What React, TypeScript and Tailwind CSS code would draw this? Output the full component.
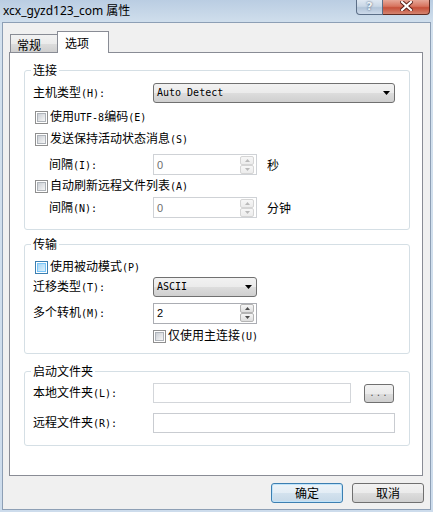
import React from "react";

function Txt({ s }: { s: string }) {
  const parts = s.match(/[\x20-\x7e]+|[^\x20-\x7e]+/g) || [];
  return (
    <>
      {parts.map((p, i) =>
        /^[\x20-\x7e]/.test(p) ? (
          <span key={i} className="font-['DejaVu_Sans_Mono',monospace] text-[10px]">
            {p}
          </span>
        ) : (
          <span key={i}>{p}</span>
        )
      )}
    </>
  );
}

function Check({ blue }: { blue?: boolean }) {
  return (
    <span
      className={
        blue
          ? "w-[13px] h-[13px] shrink-0 border border-[#3c7fb1] bg-white flex items-center justify-center"
          : "w-[13px] h-[13px] shrink-0 border border-[#8f8f8f] bg-white flex items-center justify-center"
      }
    >
      <span
        className={
          blue
            ? "w-[9px] h-[9px] border border-[#79c6f9] bg-[linear-gradient(135deg,#a6d6f6,#def1fc)]"
            : "w-[9px] h-[9px] border border-[#aeb3b9] bg-[linear-gradient(135deg,#cbcfd5,#f6f6f6)]"
        }
      />
    </span>
  );
}

function Arrow() {
  return (
    <svg width="7" height="4" viewBox="0 0 7 4" className="shrink-0">
      <path d="M0 0H7L3.5 4Z" fill="#000" />
    </svg>
  );
}

function Combo({ text, wide }: { text: string; wide?: boolean }) {
  return (
    <div
      className={
        (wide ? "w-[242px] " : "w-[104px] ") +
        "h-[20px] border border-[#707070] rounded-[3px] bg-[linear-gradient(to_bottom,#f2f2f2_0%,#ebebeb_50%,#dddddd_51%,#cfcfcf_100%)] flex items-center justify-between pl-[3px] pr-[4px]"
      }
    >
      <span className="font-['DejaVu_Sans_Mono',monospace] text-[10px] text-black">{text}</span>
      <Arrow />
    </div>
  );
}

function SpinBtn({ up, enabled }: { up?: boolean; enabled?: boolean }) {
  return (
    <div
      className={
        enabled
          ? "w-[14px] h-[9px] border border-[#b4b4b4] rounded-[2px] bg-[linear-gradient(to_bottom,#f6f6f6,#dedede)] flex items-center justify-center"
          : "w-[14px] h-[9px] border border-[#d5d5d5] rounded-[2px] bg-[linear-gradient(to_bottom,#f7f7f7,#ececec)] flex items-center justify-center"
      }
    >
      <svg width="5" height="3" viewBox="0 0 5 3">
        <path d={up ? "M0 3H5L2.5 0Z" : "M0 0H5L2.5 3Z"} fill={enabled ? "#4d4d4d" : "#b9b9b9"} />
      </svg>
    </div>
  );
}

function Spin({ value, enabled }: { value: string; enabled?: boolean }) {
  return (
    <div
      className={
        enabled
          ? "w-[104px] h-[21px] shrink-0 border border-[#abadb3] bg-white flex items-center pl-[3px] pr-[2px]"
          : "w-[104px] h-[21px] shrink-0 border border-[#cfd2d6] bg-white flex items-center pl-[3px] pr-[2px]"
      }
    >
      <span
        className={
          enabled
            ? "flex-1 font-['Liberation_Sans',sans-serif] text-[11px] text-black"
            : "flex-1 font-['Liberation_Sans',sans-serif] text-[11px] text-[#6d6d6d]"
        }
      >
        {value}
      </span>
      <div className="flex flex-col">
        <SpinBtn up enabled={enabled} />
        <SpinBtn enabled={enabled} />
      </div>
    </div>
  );
}

function Group({
  title,
  className,
  children,
}: {
  title: string;
  className: string;
  children: React.ReactNode;
}) {
  return (
    <div className={"ml-[14px] w-[386px] border border-[#d5dfe5] rounded-[3px] pl-[8px] " + className}>
      <div className="-mt-[9px] -ml-[2px] w-fit h-[16px] bg-white px-[2px]">{title}</div>
      {children}
    </div>
  );
}

const BTN =
  "bg-[linear-gradient(to_bottom,#f2f2f2_0%,#ebebeb_50%,#dddddd_51%,#cfcfcf_100%)]";

export default function App() {
  return (
    <div className="w-[433px] h-[512px] flex flex-col overflow-hidden bg-[linear-gradient(to_bottom,#bacde2_0%,#d3e1ee_5%,#cddcec_100%)] font-['Noto_Sans_CJK_SC',sans-serif] text-[12px] leading-[16px] text-black">
      {/* title bar */}
      <div className="h-[22px] shrink-0 flex items-start justify-between">
        <div className="pl-[3px] pt-[3px] font-['Noto_Sans','Noto_Sans_CJK_SC',sans-serif] text-[12px] leading-[16px] text-black">
          xcx_gyzd123_com 属性
        </div>
        <div className="flex mr-[3px]">
          <div className="w-[27px] h-[15px] rounded-bl-[4px] border border-t-0 border-[#5b6e87] bg-[linear-gradient(to_bottom,#dfe8f2_0%,#c9d7e6_45%,#b2c4d8_55%,#cddaea_100%)] flex items-start justify-center">
            <span className="font-['DejaVu_Sans',sans-serif] font-bold text-[11px] leading-[13px] text-[#eef2f7] [text-shadow:0_0_2px_#2e4666]">
              ?
            </span>
          </div>
          <div className="w-[47px] h-[15px] rounded-br-[4px] border border-t-0 border-l-0 border-[#5e2b22] bg-[linear-gradient(to_bottom,#e7a798_0%,#d7745f_45%,#c6503a_55%,#d48470_100%)] flex items-start justify-center pt-[1px]">
            <svg width="13" height="10" viewBox="0 0 13 10">
              <path d="M2 1L11 9M11 1L2 9" stroke="#5a2019" strokeWidth="4" strokeLinecap="square" />
              <path d="M2 1L11 9M11 1L2 9" stroke="#ffffff" strokeWidth="2.2" strokeLinecap="square" />
            </svg>
          </div>
        </div>
      </div>

      {/* client */}
      <div className="mx-[2px] h-[488px] shrink-0 border border-[#8d9fb5] bg-[#f0f0f0] flex flex-col">
        {/* tabs */}
        <div className="h-[29px] shrink-0 flex items-end pl-[7px]">
          <div className={"w-[47px] h-[18px] border-l border-t border-[#898c95] pl-[6px] pt-[2px] " + BTN}>
            常规
          </div>
          <div className="relative z-10 -mb-px w-[52px] h-[22px] border-l border-t border-r border-[#898c95] bg-white pl-[7px] pt-[3px]">
            选项
          </div>
        </div>

        {/* panel */}
        <div className="ml-[6px] w-[414px] h-[424px] shrink-0 border border-[#898c95] bg-white flex flex-col">
          <Group title="连接" className="mt-[17px] pb-[11px]">
            <div className="mt-[5px] h-[20px] flex items-center">
              <div className="w-[120px] shrink-0">
                <Txt s="主机类型(H):" />
              </div>
              <Combo text="Auto Detect" wide />
            </div>
            <div className="mt-[4px] h-[20px] flex items-center pl-[2px] gap-[2px]">
              <Check />
              <span>
                <Txt s="使用UTF-8编码(E)" />
              </span>
            </div>
            <div className="mt-[2px] h-[20px] flex items-center pl-[2px] gap-[2px]">
              <Check />
              <span>
                <Txt s="发送保持活动状态消息(S)" />
              </span>
            </div>
            <div className="mt-[5px] h-[21px] flex items-center">
              <div className="w-[120px] shrink-0 pl-[16px]">
                <Txt s="间隔(I):" />
              </div>
              <Spin value="0" />
              <span className="ml-[10px]">秒</span>
            </div>
            <div className="mt-[1px] h-[20px] flex items-center pl-[2px] gap-[2px]">
              <Check />
              <span>
                <Txt s="自动刷新远程文件列表(A)" />
              </span>
            </div>
            <div className="mt-[1px] h-[21px] flex items-center">
              <div className="w-[120px] shrink-0 pl-[16px]">
                <Txt s="间隔(N):" />
              </div>
              <Spin value="0" />
              <span className="ml-[10px]">分钟</span>
            </div>
          </Group>

          <Group title="传输" className="mt-[14px] pb-[7px]">
            <div className="mt-[5px] h-[20px] flex items-center pl-[2px] gap-[2px]">
              <Check blue />
              <span>
                <Txt s="使用被动模式(P)" />
              </span>
            </div>
            <div className="h-[20px] flex items-center">
              <div className="w-[120px] shrink-0">
                <Txt s="迁移类型(T):" />
              </div>
              <Combo text="ASCII" />
            </div>
            <div className="mt-[6px] h-[20px] flex items-center">
              <div className="w-[120px] shrink-0">
                <Txt s="多个转机(M):" />
              </div>
              <Spin value="2" enabled />
            </div>
            <div className="mt-[3px] h-[20px] flex items-center pl-[120px] gap-[2px]">
              <Check />
              <span>
                <Txt s="仅使用主连接(U)" />
              </span>
            </div>
          </Group>

          <Group title="启动文件夹" className="mt-[17px] pb-[12px]">
            <div className="mt-[4px] h-[20px] flex items-center">
              <div className="w-[120px] shrink-0">
                <Txt s="本地文件夹(L):" />
              </div>
              <div className="w-[198px] h-[20px] border border-[#d3d6da] bg-white" />
              <div className={"ml-[13px] w-[30px] h-[19px] border border-[#707070] rounded-[3px] flex items-center justify-center " + BTN}>
                <span className="font-['DejaVu_Sans_Mono',monospace] text-[9px] leading-[9px] tracking-[1px] text-[#555]">...</span>
              </div>
            </div>
            <div className="mt-[10px] h-[20px] flex items-center">
              <div className="w-[120px] shrink-0">
                <Txt s="远程文件夹(R):" />
              </div>
              <div className="w-[242px] h-[20px] border border-[#c9ccd1] bg-white" />
            </div>
          </Group>
        </div>

        {/* buttons */}
        <div className="mt-[7px] flex justify-end gap-[9px] pr-[6px]">
          <div className="w-[72px] h-[20px] border border-[#3c7fb1] rounded-[3px] bg-[linear-gradient(to_bottom,#edf4f9_0%,#e3edf5_50%,#d3e2ee_51%,#c7d9e8_100%)] shadow-[inset_0_0_0_1px_#bfe3fa] flex items-center justify-center">
            确定
          </div>
          <div className={"w-[72px] h-[20px] border border-[#707070] rounded-[3px] flex items-center justify-center " + BTN}>
            取消
          </div>
        </div>
      </div>
    </div>
  );
}
